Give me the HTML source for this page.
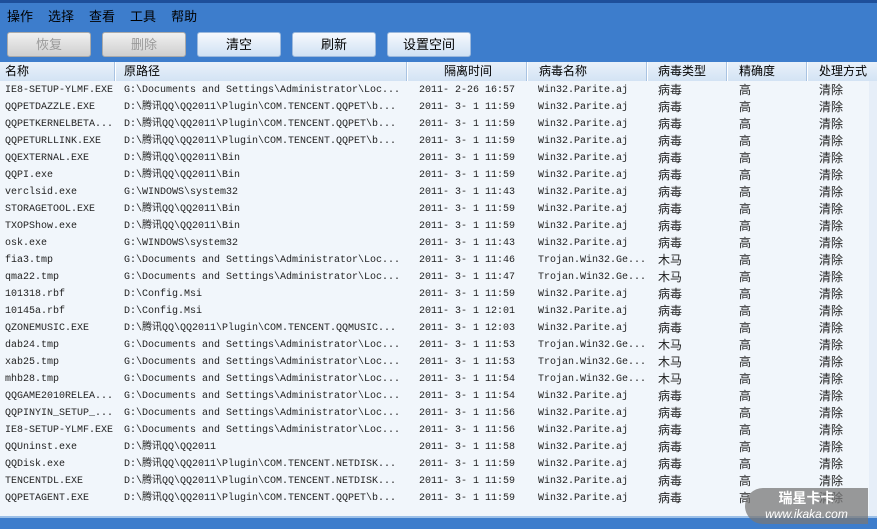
<!DOCTYPE html><html><head><meta charset="utf-8"><style>
body{margin:0;width:877px;height:529px;overflow:hidden;background:#3d7dcc;font-family:"Liberation Sans","Noto Sans CJK SC",sans-serif;position:relative}
.top{position:absolute;left:0;top:0;width:877px;height:3px;background:#1e4f9a}
.menu{position:absolute;top:6px;left:7px;font-size:13px;color:#000}
.menu span{margin-right:15px}
.btn{position:absolute;top:32px;width:84px;height:25px;border-radius:3px;background:linear-gradient(#f6f9fd,#d0e2f4);border:1px solid #9bb8dc;font-size:13px;text-align:center;line-height:23px;color:#000;box-sizing:border-box}
.dis{background:linear-gradient(#f0f0f0,#cfcfcf);color:#999;border-color:#aaa}
.hdr{position:absolute;top:62px;left:0;width:877px;height:19px;background:linear-gradient(#e9f1fa,#d3e3f4);font-size:12px;line-height:19px}
.hdr span{position:absolute;top:0}
.sep{position:absolute;top:62px;width:1px;height:19px;background:#a9c3e2;border-right:1px solid #fff}
.list{position:absolute;top:81px;left:0;width:869px;height:435px;background:#f1f6fb}
.r{position:absolute;left:0;height:17px;width:869px;font-size:10px;line-height:17px;font-family:"Liberation Mono","Noto Sans CJK SC",monospace;color:#222;white-space:pre}
.r span{position:absolute;top:1px}
.r span.c{font-family:"Liberation Sans","Noto Sans CJK SC",sans-serif;font-size:12px;top:1px}
.sb{position:absolute;left:869px;top:81px;width:8px;height:435px;background:#e6eef8}
.bot2{position:absolute;left:0;top:516px;width:877px;height:13px;background:#3d7dcc;border-top:2px solid #9cc0e8;box-sizing:border-box}
.wm{position:absolute;left:745px;top:488px;width:123px;height:36px;background:rgba(120,120,120,.75);border-radius:18px 0 0 18px;color:#fff;text-align:center;font-size:14px;line-height:15px;padding-top:3px;box-sizing:border-box}
</style></head><body>
<div class="top"></div>
<div class="menu"><span>操作</span><span>选择</span><span>查看</span><span>工具</span><span>帮助</span></div>
<div class="btn dis" style="left:7px">恢复</div>
<div class="btn dis" style="left:102px">删除</div>
<div class="btn" style="left:197px">清空</div>
<div class="btn" style="left:292px">刷新</div>
<div class="btn" style="left:387px">设置空间</div>
<div class="hdr"><span style="left:5px">名称</span><span style="left:124px">原路径</span><span style="left:444px">隔离时间</span><span style="left:539px">病毒名称</span><span style="left:658px">病毒类型</span><span style="left:739px">精确度</span><span style="left:819px">处理方式</span></div>
<div class="sep" style="left:114px"></div><div class="sep" style="left:406px"></div><div class="sep" style="left:526px"></div><div class="sep" style="left:646px"></div><div class="sep" style="left:726px"></div><div class="sep" style="left:806px"></div>
<div class="list" id="l"></div>
<div class="sb"></div>
<div class="bot2"></div>
<div class="wm"><b>瑞星卡卡</b><br><span style="font-size:12px;font-style:italic">www.ikaka.com</span></div>
<script>
var d=[["IE8-SETUP-YLMF.EXE","G:\\Documents and Settings\\Administrator\\Loc...","2011- 2-26 16:57","Win32.Parite.aj","病毒"],
["QQPETDAZZLE.EXE","D:\\腾讯QQ\\QQ2011\\Plugin\\COM.TENCENT.QQPET\\b...","2011- 3- 1 11:59","Win32.Parite.aj","病毒"],
["QQPETKERNELBETA...","D:\\腾讯QQ\\QQ2011\\Plugin\\COM.TENCENT.QQPET\\b...","2011- 3- 1 11:59","Win32.Parite.aj","病毒"],
["QQPETURLLINK.EXE","D:\\腾讯QQ\\QQ2011\\Plugin\\COM.TENCENT.QQPET\\b...","2011- 3- 1 11:59","Win32.Parite.aj","病毒"],
["QQEXTERNAL.EXE","D:\\腾讯QQ\\QQ2011\\Bin","2011- 3- 1 11:59","Win32.Parite.aj","病毒"],
["QQPI.exe","D:\\腾讯QQ\\QQ2011\\Bin","2011- 3- 1 11:59","Win32.Parite.aj","病毒"],
["verclsid.exe","G:\\WINDOWS\\system32","2011- 3- 1 11:43","Win32.Parite.aj","病毒"],
["STORAGETOOL.EXE","D:\\腾讯QQ\\QQ2011\\Bin","2011- 3- 1 11:59","Win32.Parite.aj","病毒"],
["TXOPShow.exe","D:\\腾讯QQ\\QQ2011\\Bin","2011- 3- 1 11:59","Win32.Parite.aj","病毒"],
["osk.exe","G:\\WINDOWS\\system32","2011- 3- 1 11:43","Win32.Parite.aj","病毒"],
["fia3.tmp","G:\\Documents and Settings\\Administrator\\Loc...","2011- 3- 1 11:46","Trojan.Win32.Ge...","木马"],
["qma22.tmp","G:\\Documents and Settings\\Administrator\\Loc...","2011- 3- 1 11:47","Trojan.Win32.Ge...","木马"],
["101318.rbf","D:\\Config.Msi","2011- 3- 1 11:59","Win32.Parite.aj","病毒"],
["10145a.rbf","D:\\Config.Msi","2011- 3- 1 12:01","Win32.Parite.aj","病毒"],
["QZONEMUSIC.EXE","D:\\腾讯QQ\\QQ2011\\Plugin\\COM.TENCENT.QQMUSIC...","2011- 3- 1 12:03","Win32.Parite.aj","病毒"],
["dab24.tmp","G:\\Documents and Settings\\Administrator\\Loc...","2011- 3- 1 11:53","Trojan.Win32.Ge...","木马"],
["xab25.tmp","G:\\Documents and Settings\\Administrator\\Loc...","2011- 3- 1 11:53","Trojan.Win32.Ge...","木马"],
["mhb28.tmp","G:\\Documents and Settings\\Administrator\\Loc...","2011- 3- 1 11:54","Trojan.Win32.Ge...","木马"],
["QQGAME2010RELEA...","G:\\Documents and Settings\\Administrator\\Loc...","2011- 3- 1 11:54","Win32.Parite.aj","病毒"],
["QQPINYIN_SETUP_...","G:\\Documents and Settings\\Administrator\\Loc...","2011- 3- 1 11:56","Win32.Parite.aj","病毒"],
["IE8-SETUP-YLMF.EXE","G:\\Documents and Settings\\Administrator\\Loc...","2011- 3- 1 11:56","Win32.Parite.aj","病毒"],
["QQUninst.exe","D:\\腾讯QQ\\QQ2011","2011- 3- 1 11:58","Win32.Parite.aj","病毒"],
["QQDisk.exe","D:\\腾讯QQ\\QQ2011\\Plugin\\COM.TENCENT.NETDISK...","2011- 3- 1 11:59","Win32.Parite.aj","病毒"],
["TENCENTDL.EXE","D:\\腾讯QQ\\QQ2011\\Plugin\\COM.TENCENT.NETDISK...","2011- 3- 1 11:59","Win32.Parite.aj","病毒"],
["QQPETAGENT.EXE","D:\\腾讯QQ\\QQ2011\\Plugin\\COM.TENCENT.QQPET\\b...","2011- 3- 1 11:59","Win32.Parite.aj","病毒"]];
var h="";d.forEach(function(r,i){h+='<div class="r" style="top:'+(i*17)+'px"><span style="left:5px">'+r[0]+'</span><span style="left:124px">'+r[1]+'</span><span style="left:419px">'+r[2]+'</span><span style="left:538px">'+r[3]+'</span><span class="c" style="left:658px">'+r[4]+'</span><span class="c" style="left:739px">高</span><span class="c" style="left:819px">清除</span></div>'});
document.getElementById("l").innerHTML=h;
</script>
</body></html>
